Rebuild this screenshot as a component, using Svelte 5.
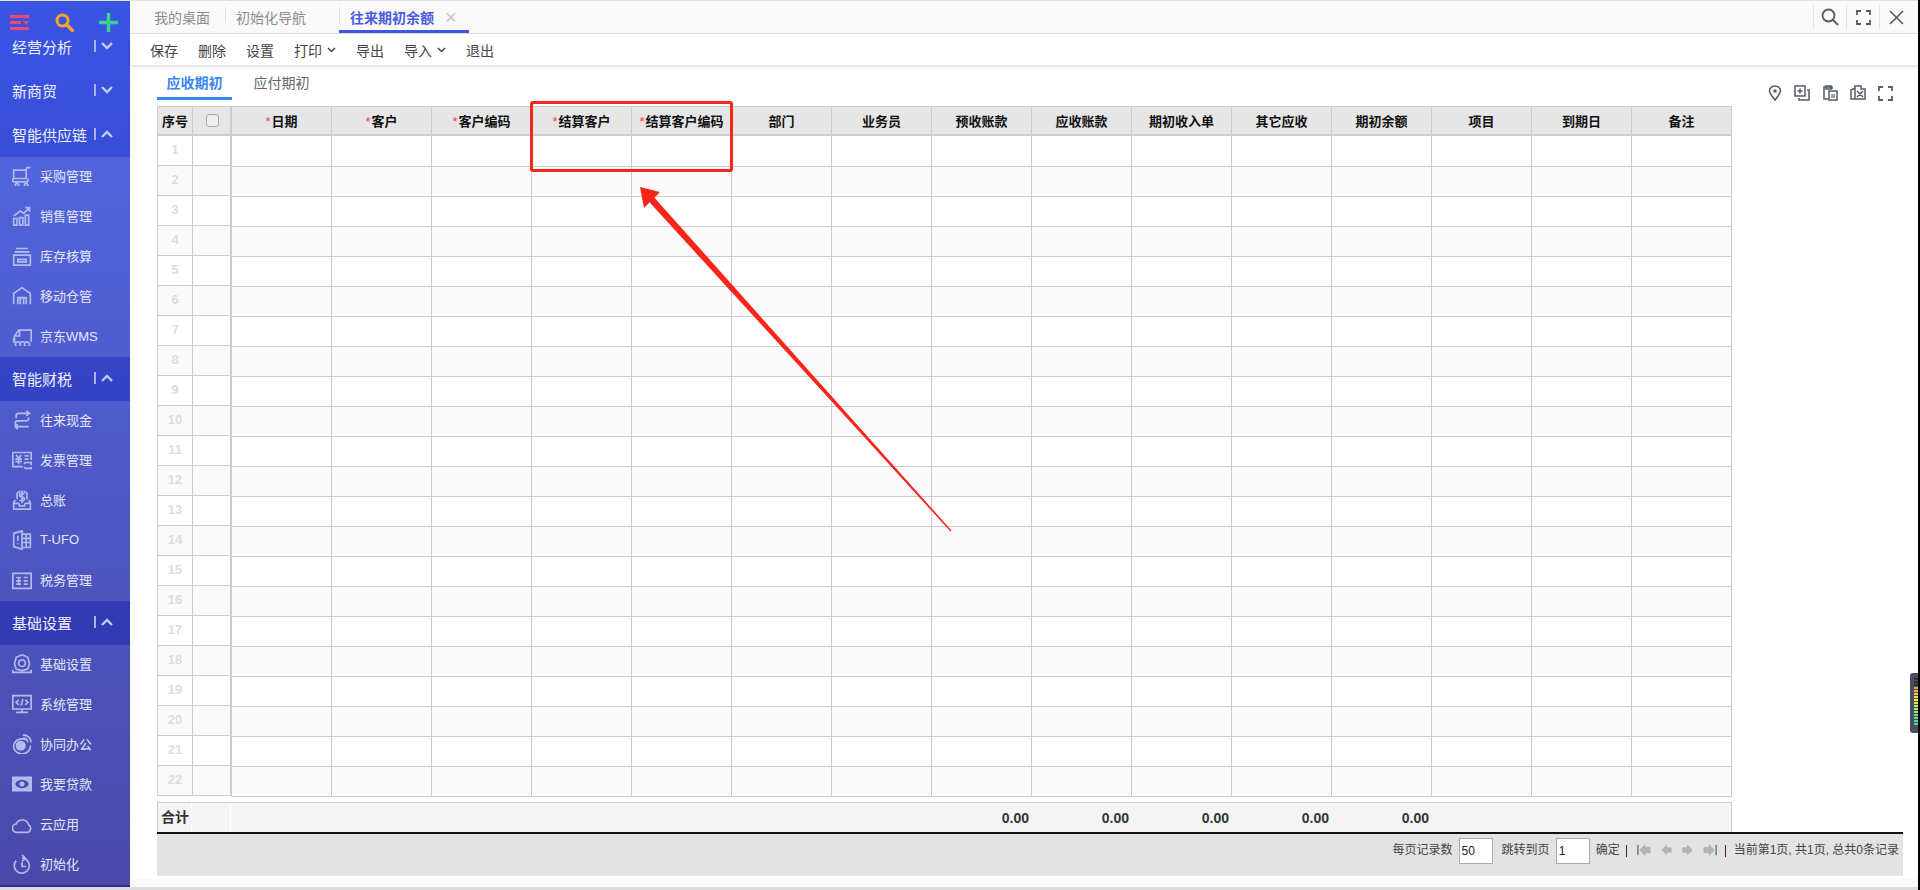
<script lang="ts">
	const icons: Record<string, string> = {
		cart: 'M2 5h15v10H2zM17 15V4l1-2h4M1 19h18M1 15v4M19 15v4M6 21a2 2 0 1 0 .01 0M17 21a2 2 0 1 0 .01 0',
		chart: 'M2 12l8-6 4 3 7-7M16 2h5v5M2 15h4v8H2zM9 14h4v9H9zM16 11h4v12h-4z',
		stock: 'M5 3h14M3 7h18M2 11h20v12H2zM7 16h10v3H7z',
		mobile: 'M2 22V9l10-7 10 7v13M7 22v-8h10v8M10 14v8M14 14v8',
		truck: 'M23 19V5H8l-5 7v7M3 12h6V5M2 14v5h2M10 19h5M7 19a3 3 0 1 0 .01 0M18 19a3 3 0 1 0 .01 0',
		cash: 'M5 10V7a3 3 0 0 1 3-3h12M17 1l4 3-4 3M20 9v1a3 3 0 0 1-3 3H7a3 3 0 0 0-3 3v1a3 3 0 0 0 3 3h13M7 23l-3-3 3-3',
		bill: 'M23 12V3H1v17h12M5 6l3 4 3-4M4 11h8M4 14h8M8 10v7M15 7h5M15 11h5M15 15h8v3M15 22h8v-2M15 15v2M15 20v2',
		ledger: 'M4 12L2 15v8h20v-8l-2-3M2 16h6l1 3h6l1-3h6M15 5a4 4 0 0 0-3-1c-4 0-4 4 0 4.500s4 4 0 4.500a4 4 0 0 1-3-1M12 1v15M6 11V4l4-3M18 11V4l-4-3',
		ufo: 'M2 4l10-3v22L2 20zM12 5h10v16H12zM12 10h10M12 15h10M17 5v16M7 7v6M7 16v1',
		tax: 'M1 4h22v18H1zM5 9h6M5 13h6M5 17h6M8 9v8M14 9h5M14 13h5M14 17h5',
		gear: 'M12 1l7 3 2 8-2 6-7 2-7-2-2-6 2-8zM12 7a4 4 0 1 0 .01 0M1 19v3h22v-3',
		code: 'M1 2h22v16H1zM12 18v4M5 22h14M8 7l-3 3 3 3M16 7l3 3-3 3M13 6l-2 8',
		sync: 'M17 7a10 9 0 1 0 5 7M13 1a10 10 0 0 1 10 9M13 5a6 6 0 0 1 6 5',
		cloud: 'M6 22a5 5 0 0 1-1-10 8 8 0 0 1 15 1 5 5 0 0 1-1 9z',
		init: 'M5 8a9 9 0 1 0 7-3h3M12 1l4 4-4 4M12 10v5h5'
	};

	type Item = { label: string; icon: string };
	type Group = { title: string; open: boolean; items: Item[] };

	const groups: Group[] = [
		{ title: '经营分析', open: false, items: [] },
		{ title: '新商贸', open: false, items: [] },
		{
			title: '智能供应链',
			open: true,
			items: [
				{ label: '采购管理', icon: 'cart' },
				{ label: '销售管理', icon: 'chart' },
				{ label: '库存核算', icon: 'stock' },
				{ label: '移动仓管', icon: 'mobile' },
				{ label: '京东WMS', icon: 'truck' }
			]
		},
		{
			title: '智能财税',
			open: true,
			items: [
				{ label: '往来现金', icon: 'cash' },
				{ label: '发票管理', icon: 'bill' },
				{ label: '总账', icon: 'ledger' },
				{ label: 'T-UFO', icon: 'ufo' },
				{ label: '税务管理', icon: 'tax' }
			]
		},
		{
			title: '基础设置',
			open: true,
			items: [
				{ label: '基础设置', icon: 'gear' },
				{ label: '系统管理', icon: 'code' },
				{ label: '协同办公', icon: 'sync' },
				{ label: '我要贷款', icon: 'loan' },
				{ label: '云应用', icon: 'cloud' },
				{ label: '初始化', icon: 'init' }
			]
		}
	];

	const columns = [
		{ title: '日期', required: true },
		{ title: '客户', required: true },
		{ title: '客户编码', required: true },
		{ title: '结算客户', required: true },
		{ title: '结算客户编码', required: true },
		{ title: '部门' },
		{ title: '业务员' },
		{ title: '预收账款', total: '0.00' },
		{ title: '应收账款', total: '0.00' },
		{ title: '期初收入单', total: '0.00' },
		{ title: '其它应收', total: '0.00' },
		{ title: '期初余额', total: '0.00' },
		{ title: '项目' },
		{ title: '到期日' },
		{ title: '备注' }
	];

	const rows = Array.from({ length: 22 }, (_, i) => i + 1);

	// little level meter stuck on the right edge
	const meter = ['#f59a45', '#f7b44a', '#f9c94c', '#f7dc4e', '#f2e654', '#e6ea58', '#cfe85e', '#b2e668', '#94e274', '#76de84', '#5cdc96', '#4cdaa8', '#46d8b8'];
</script>

<div class="frame">
	<div class="shell">
		<aside class="sidebar">
			<div class="side-top">
				<svg class="top-icon" width="20" height="18" viewBox="0 0 20 18">
					<path d="M0 2.500h19M0 8.500h11M0 14.500h19" stroke="#f4476f" stroke-width="3" fill="none" />
					<path d="M13 7h6l-3 4z" fill="#f4476f" />
				</svg>
				<svg class="top-icon" width="19" height="19" viewBox="0 0 19 19">
					<circle cx="7.500" cy="7.500" r="5.500" stroke="#f5a623" stroke-width="3" fill="none" />
					<path d="M11.500 11.500l6 6" stroke="#f5a623" stroke-width="3.500" stroke-linecap="round" />
				</svg>
				<svg class="top-icon" width="19" height="19" viewBox="0 0 19 19">
					<path d="M9.500 0v19M0 9.500h19" stroke="#3ed08f" stroke-width="3.500" />
				</svg>
			</div>
			<div class="side-list">
				{#each groups as group}
					<div class="group-head">
						<span class="group-title">{group.title}</span>
						<span class="group-bar"></span>
						<svg width="12" height="8" viewBox="0 0 12 8">
							<path d={group.open ? 'M1 7l5-5 5 5' : 'M1 1l5 5 5-5'} stroke="#c3caf6" stroke-width="2.400" fill="none" />
						</svg>
					</div>
					{#each group.items as item}
						<div class="item">
							{#if item.icon === 'loan'}
								<svg width="20" height="20" viewBox="0 0 24 24">
									<path fill-rule="evenodd" d="M0 3h24v18H0zM12 7a8 5 0 1 0 .01 0z" fill="#b3bbee" />
									<circle cx="12" cy="12" r="3" fill="#b3bbee" />
								</svg>
							{:else}
								<svg width="20" height="20" viewBox="0 0 24 24">
									<path d={icons[item.icon]} stroke="#b3bbee" stroke-width="2" fill="none" />
									{#if item.icon === 'sync'}
										<circle cx="10.500" cy="14" r="6" fill="#b3bbee" />
									{/if}
								</svg>
							{/if}
							<span>{item.label}</span>
						</div>
					{/each}
				{/each}
			</div>
		</aside>

		<main class="main">
			<div class="tabbar">
				<span class="tab">我的桌面</span>
				<span class="tab sep">初始化导航</span>
				<span class="tab sep active">往来期初余额<i class="close">×</i></span>
				<div class="win-btns">
					<button aria-label="搜索">
						<svg width="18" height="18" viewBox="0 0 18 18"><circle cx="7.500" cy="7.500" r="6" stroke="#555a66" stroke-width="1.800" fill="none" /><path d="M12 12l5 5" stroke="#555a66" stroke-width="1.800" /></svg>
					</button>
					<button aria-label="全屏">
						<svg width="15" height="15" viewBox="0 0 15 15"><path d="M1 5V1h4M10 1h4v4M14 10v4h-4M5 14H1v-4" stroke="#555a66" stroke-width="1.800" fill="none" /></svg>
					</button>
					<button aria-label="关闭">
						<svg width="15" height="15" viewBox="0 0 15 15"><path d="M1 1l13 13M14 1L1 14" stroke="#555a66" stroke-width="1.600" /></svg>
					</button>
				</div>
			</div>

			<div class="toolbar">
				<span>保存</span>
				<span>删除</span>
				<span>设置</span>
				<span class="drop">打印<svg width="9" height="6" viewBox="0 0 9 6"><path d="M1 1l3.500 3.500L8 1" stroke="#444" stroke-width="1.500" fill="none" /></svg></span>
				<span>导出</span>
				<span class="drop">导入<svg width="9" height="6" viewBox="0 0 9 6"><path d="M1 1l3.500 3.500L8 1" stroke="#444" stroke-width="1.500" fill="none" /></svg></span>
				<span>退出</span>
			</div>

			<div class="content">
				<div class="subbar">
					<span class="subtab on">应收期初</span>
					<span class="subtab">应付期初</span>
					<div class="tools">
						<svg width="14" height="16" viewBox="0 0 14 16"><path d="M7 15C3 10 1.500 8 1.500 6a5.500 5 0 0 1 11 0c0 2-1.500 4-5.500 9z" stroke="#565b68" stroke-width="1.600" fill="none" /><circle cx="7" cy="6" r="1.800" fill="#565b68" /></svg>
						<svg width="16" height="16" viewBox="0 0 16 16"><path d="M1 1h10v10H1zM13 5h2v10H5v-2M6 3.500v5M3.500 6h5" stroke="#565b68" stroke-width="1.500" fill="none" /></svg>
						<svg width="16" height="16" viewBox="0 0 16 16"><path d="M10 4V2H2v12h4M4 1h5v3H4zM7 6h8v9H7z" stroke="#565b68" stroke-width="1.500" fill="none" /><path d="M9 9h4v4H9z" fill="#9a9da6" /></svg>
						<svg width="16" height="16" viewBox="0 0 16 16"><path d="M5 1h6v3h4v10H5zM5 3L1 5v9h4M7 6l6 6M13 6l-6 6" stroke="#565b68" stroke-width="1.500" fill="none" /></svg>
						<svg width="15" height="15" viewBox="0 0 15 15"><path d="M1 5V1h4M10 1h4v4M14 10v4h-4M5 14H1v-4" stroke="#565b68" stroke-width="1.800" fill="none" /></svg>
					</div>
				</div>

				<div class="grid-wrap">
					<table class="frozen">
						<thead>
							<tr><th class="c-seq">序号</th><th class="c-check"><span class="checkbox"></span></th></tr>
						</thead>
						<tbody>
							{#each rows as n}
								<tr><td class="num">{n}</td><td></td></tr>
							{/each}
						</tbody>
					</table>
					<table class="data">
						<thead>
							<tr>
								{#each columns as col}
									<th>{#if col.required}<em>*</em>{/if}{col.title}</th>
								{/each}
							</tr>
						</thead>
						<tbody>
							{#each rows as n}
								<tr>
									{#each columns as col}
										<td></td>
									{/each}
								</tr>
							{/each}
						</tbody>
					</table>
				</div>

				<div class="totals">
					<span class="t-label">合计</span>
					<span class="t-check"></span>
					{#each columns as col}
						<span class="t-cell">{col.total ?? ''}</span>
					{/each}
				</div>

				<div class="pager">
					<span>每页记录数</span>
					<input value="50" />
					<span class="gap-l">跳转到页</span>
					<input value="1" />
					<span>确定</span>
					<b class="pipe"></b>
					<div class="arrows">
						<svg width="14" height="14" viewBox="0 0 16 14"><path d="M0 1h2v12H0z" fill="#888" /><path d="M3 7l6-6v3h6v6H9v3z" fill="#b4b4b4" stroke="#999" stroke-width=".5" /></svg>
						<svg width="11" height="12" viewBox="0 0 14 14"><path d="M1 7l6-6v3h6v6H7v3z" fill="#b4b4b4" stroke="#999" stroke-width=".5" /></svg>
						<svg width="11" height="12" viewBox="0 0 14 14"><path d="M13 7L7 1v3H1v6h6v3z" fill="#b4b4b4" stroke="#999" stroke-width=".5" /></svg>
						<svg width="14" height="14" viewBox="0 0 16 14"><path d="M14 1h2v12h-2z" fill="#888" /><path d="M13 7L7 1v3H1v6h6v3z" fill="#b4b4b4" stroke="#999" stroke-width=".5" /></svg>
					</div>
					<b class="pipe"></b>
					<span>当前第1页, 共1页, 总共0条记录</span>
				</div>
			</div>
		</main>
	</div>
	<div class="bottom-line"></div>

	<div class="callout"></div>
	<svg class="arrow" width="1920" height="890" viewBox="0 0 1920 890">
		<polygon points="640,187 660,192 654.500,197.700 951.500,530.500 950.500,531.500 649.500,202.300 644,208" fill="#f9241a" />
	</svg>

	<div class="meter">
		<i class="dim"></i><i class="dim"></i><i class="dim"></i>
		{#each meter as color}
			<i style="background: {color}"></i>
		{/each}
	</div>
</div>

<style>
	:global(body) {
		margin: 0;
		background: #000;
	}

	.frame {
		position: relative;
		width: 1918px;
		height: 890px;
		overflow: hidden;
		display: flex;
		flex-direction: column;
		background: #fff;
		color: #333;
		font-family: 'Liberation Sans', 'Noto Sans CJK SC', sans-serif;
		border-top: 1px solid #e2e2e2;
		box-sizing: border-box;
	}

	.shell {
		flex: 1;
		min-height: 0;
		display: flex;
	}

	.bottom-line {
		height: 3px;
		background: #dcdcdc;
	}

	/* sidebar */
	.sidebar {
		position: relative;
		width: 130px;
		flex: none;
		overflow: hidden;
		background: linear-gradient(180deg, #3a54e4 0%, #2f2f9e 100%);
		border-bottom: 2px solid #33288e;
		box-sizing: border-box;
	}

	.side-top {
		position: absolute;
		top: 0;
		left: 0;
		right: 0;
		height: 39px;
		z-index: 2;
		background: #3a53e3;
		display: flex;
		align-items: center;
		padding: 0 12px 0 10px;
		justify-content: space-between;
		box-sizing: border-box;
	}

	.top-icon {
		display: block;
		margin-top: 4px;
	}

	.side-list {
		padding-top: 24px;
	}

	.group-head {
		height: 44px;
		display: flex;
		align-items: center;
		padding: 0 0 2px 12px;
		box-sizing: border-box;
		color: #eef0ff;
		font-size: 15px;
		position: relative;
	}

	.group-title {
		width: 82px;
		white-space: nowrap;
	}

	.group-bar {
		width: 2px;
		height: 12px;
		background: #aab3ee;
		margin-right: 5px;
	}

	.item {
		height: 40px;
		display: flex;
		align-items: center;
		gap: 8px;
		padding: 0 0 2px 12px;
		box-sizing: border-box;
		font-size: 13px;
		color: #e4e7fb;
		background: rgba(255, 255, 255, 0.13);
	}

	.item span {
		margin-bottom: 2px;
	}

	.item svg {
		flex: none;
	}

	/* right part */
	.main {
		flex: 1;
		min-width: 0;
		display: flex;
		flex-direction: column;
	}

	.tabbar {
		height: 33px;
		flex: none;
		display: flex;
		align-items: stretch;
		background: #fafafa;
		border-bottom: 1px solid #e6e6f4;
		box-sizing: border-box;
		padding-left: 24px;
		font-size: 14px;
		color: #8c8c8c;
	}

	.tab {
		display: flex;
		align-items: center;
		white-space: nowrap;
		position: relative;
		padding-right: 15px;
	}

	.tab.sep {
		padding-left: 11px;
		padding-right: 33px;
	}

	.tab.sep::before {
		content: '';
		position: absolute;
		left: 0;
		top: 6px;
		height: 16px;
		width: 1px;
		background: #dedede;
	}

	.tab.active {
		color: #4a5be2;
		font-weight: 700;
		font-size: 14px;
		padding-right: 12px;
		box-shadow: inset 0 -3px 0 #3f58e0;
	}

	.close {
		font-style: normal;
		font-weight: 400;
		font-size: 20px;
		color: #c4c4c4;
		margin-left: 11px;
		line-height: 1;
	}

	.win-btns {
		margin-left: auto;
		display: flex;
		align-items: center;
		padding-right: 6px;
	}

	.win-btns button {
		border: 0;
		background: none;
		padding: 0;
		width: 33px;
		height: 24px;
		border-left: 1px solid #e4e4e4;
		display: flex;
		align-items: center;
		justify-content: center;
	}

	.toolbar {
		height: 31px;
		flex: none;
		display: flex;
		align-items: center;
		gap: 20px;
		padding-left: 20px;
		font-size: 14px;
		color: #444;
		background: #fff;
		box-shadow: 0 1px 4px rgba(0, 0, 0, 0.18);
		position: relative;
	}

	.drop {
		display: flex;
		align-items: center;
		gap: 5px;
	}

	.content {
		flex: 1;
		min-height: 0;
		padding: 0 15px 11px 27px;
		display: flex;
		flex-direction: column;
		background: linear-gradient(180deg, #fff 0, #fff 814px, #f9f9f9 814px);
	}

	.subbar {
		height: 41px;
		flex: none;
		display: flex;
		align-items: flex-start;
		font-size: 14px;
		color: #666;
		box-sizing: border-box;
		padding-top: 9px;
	}

	.subtab {
		height: 23px;
		width: 75px;
		text-align: center;
		margin-right: 12px;
		line-height: 19px;
		box-sizing: content-box;
	}

	.subtab.on {
		color: #3b86f0;
		font-weight: 700;
		border-bottom: 3px solid #3b86f0;
	}

	.tools {
		margin-left: auto;
		display: flex;
		align-items: center;
		gap: 12px;
		padding: 11px 10px 0 0;
	}

	.grid-wrap {
		display: flex;
		align-items: flex-start;
		flex: none;
	}

	table {
		border-collapse: collapse;
		table-layout: fixed;
		font-size: 13px;
	}

	th {
		height: 27px;
		padding: 0;
		background: #e6e6e6;
		border: 1px solid #ccc;
		color: #111;
		font-weight: 700;
		white-space: nowrap;
		border-bottom-width: 2px;
	}

	th em {
		font-style: normal;
		font-weight: 400;
		color: #f5365c;
		margin-right: 1px;
	}

	td {
		height: 29px;
		padding: 0;
		border: 1px solid #ccc;
	}

	tbody tr:nth-child(even) td {
		background: #fafafa;
	}

	.frozen {
		width: 74px;
	}

	.c-seq {
		width: 34px;
	}

	.num {
		text-align: center;
		color: #ddd;
		font-weight: 700;
		font-size: 13px;
		padding-bottom: 2px;
		height: 27px;
	}

	.checkbox {
		display: block;
		width: 11px;
		height: 11px;
		margin: 0 auto 0 13px;
		border: 1px solid #aaa;
		border-radius: 3px;
		background: #eee;
	}

	.data {
		width: 1501px;
	}

	.data tbody tr:first-child td {
		height: 30px;
	}

	.totals {
		margin-top: 5px;
		height: 30px;
		flex: none;
		width: 1575px;
		display: flex;
		align-items: center;
		box-sizing: border-box;
		background: #f4f4f4;
		border: 1px solid #ccc;
		border-bottom: 0;
		font-size: 14px;
		font-weight: 700;
		color: #333;
	}

	.t-label {
		width: 34px;
		flex: none;
		height: 100%;
		line-height: 29px;
		padding-left: 3px;
		box-sizing: border-box;
		border-right: 1px solid #fff;
	}

	.t-check {
		width: 39px;
		flex: none;
		height: 100%;
		border-right: 1px solid #fff;
		box-sizing: border-box;
	}

	.t-cell {
		width: 100px;
		flex: none;
		text-align: right;
		padding-right: 2px;
		box-sizing: border-box;
	}

	.pager {
		flex: 1;
		display: flex;
		align-items: flex-start;
		justify-content: flex-end;
		gap: 6px;
		padding: 4px 4px 0 0;
		background: #e3e3e3;
		border-top: 2px solid #111;
		font-size: 12px;
		color: #444;
		line-height: 25px;
		min-height: 0;
	}

	.pager input {
		width: 34px;
		height: 26px;
		box-sizing: border-box;
		border: 1px solid #aaa;
		background: #fff;
		padding: 0 2px;
		font: 12px 'Liberation Sans', sans-serif;
		color: #222;
		outline: none;
		border-radius: 0;
	}

	.gap-l {
		margin-left: 3px;
	}

	.pipe {
		width: 1px;
		height: 12px;
		background: #60103f;
		margin: 7px 2px 0 0;
	}

	.arrows {
		display: flex;
		gap: 10px;
		padding-top: 2px;
		align-items: center;
		height: 19px;
		margin: 0 2px;
	}

	/* annotation over the grid */
	.callout {
		position: absolute;
		left: 530px;
		top: 100px;
		width: 203px;
		height: 71px;
		box-sizing: border-box;
		border: 3px solid #f9241a;
		border-radius: 3px;
		pointer-events: none;
	}

	.arrow {
		position: absolute;
		left: 0;
		top: -1px;
		pointer-events: none;
	}

	.meter {
		position: absolute;
		right: 0;
		top: 672px;
		width: 8px;
		height: 60px;
		background: #4a4f60;
		border-radius: 3px 0 0 3px;
		display: flex;
		flex-direction: column;
		gap: 1px;
		align-items: flex-end;
		padding-top: 5px;
		box-sizing: border-box;
	}

	.meter i {
		display: block;
		width: 4px;
		height: 2px;
	}

	.meter .dim {
		background: #2c303c;
	}
</style>
